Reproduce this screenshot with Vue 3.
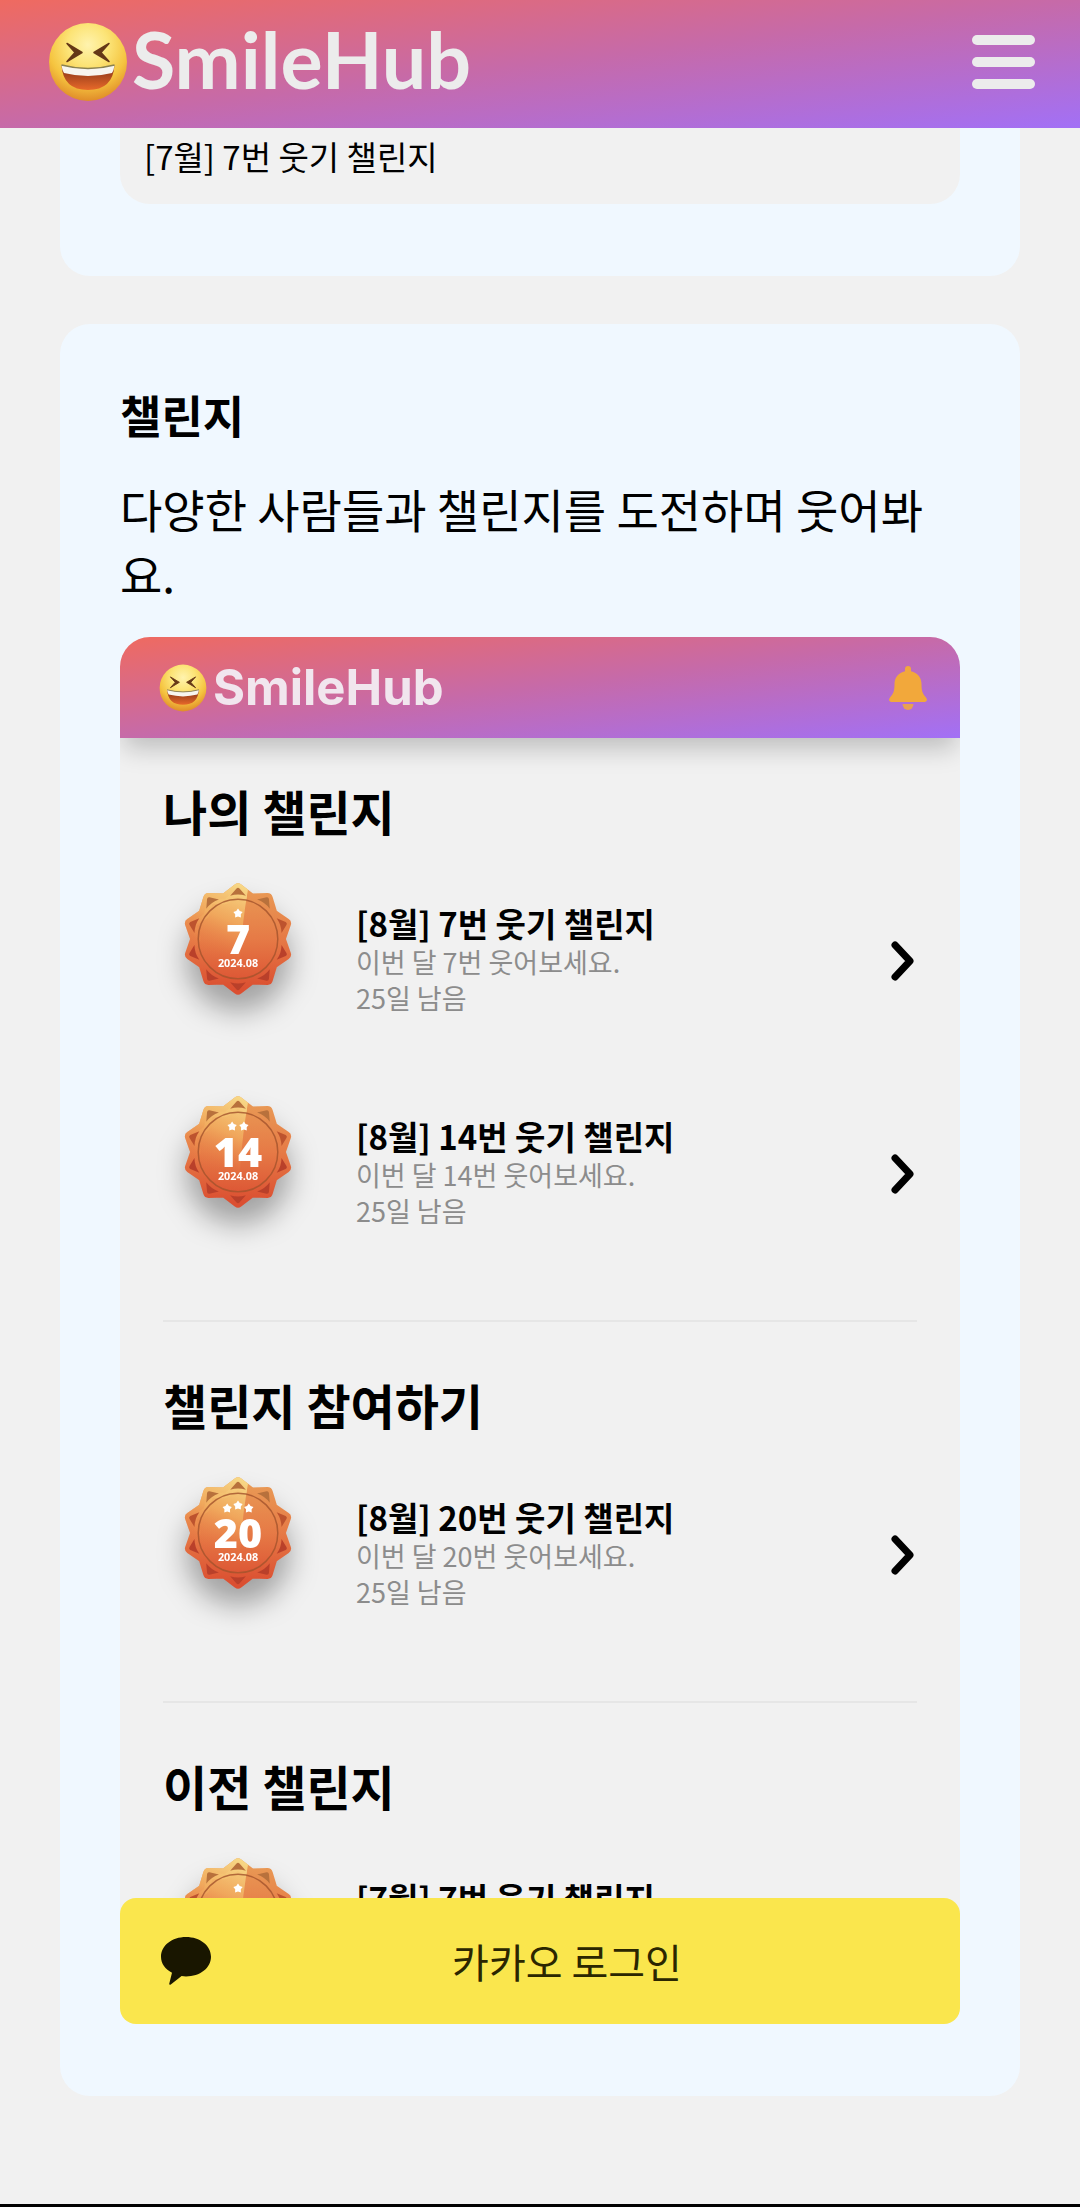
<script setup>
const sections = [
  {
    title: '나의 챌린지',
    rows: [
      { count: '7', month: '8월', period: '2024.08', stars: 1, left: '25일 남음' },
      { count: '14', month: '8월', period: '2024.08', stars: 2, left: '25일 남음' },
    ],
  },
  {
    title: '챌린지 참여하기',
    rows: [{ count: '20', month: '8월', period: '2024.08', stars: 3, left: '25일 남음' }],
  },
  {
    title: '이전 챌린지',
    rows: [{ count: '7', month: '7월', stars: 1 }],
  },
]

const polar = (r, deg) => {
  const a = (deg * Math.PI) / 180
  return `${(r * Math.sin(a)).toFixed(2)},${(-r * Math.cos(a)).toFixed(2)}`
}

// ten-pointed rosette outline
const rosette = Array.from({ length: 20 }, (_, i) => polar(i % 2 ? 43 : 51, i * 18)).join(' ')
const spikes = Array.from({ length: 10 }, (_, i) => i * 36)
const star = Array.from({ length: 10 }, (_, i) => polar(i % 2 ? 3 : 5, i * 36)).join(' ')
const starSpots = {
  1: [[0, -26]],
  2: [[-6, -26], [6, -26]],
  3: [[-11, -25], [0, -28], [11, -25]],
}
</script>

<template>
  <div class="page">
    <svg class="defs" width="0" height="0" aria-hidden="true">
      <defs>
        <radialGradient id="face" cx="0.5" cy="0.28" r="0.75">
          <stop offset="0" stop-color="#fff3ae" />
          <stop offset="0.35" stop-color="#fce477" />
          <stop offset="0.68" stop-color="#f5c43f" />
          <stop offset="1" stop-color="#dd8426" />
        </radialGradient>
        <linearGradient id="mouth" x1="0" y1="0" x2="0" y2="1">
          <stop offset="0" stop-color="#7e2f16" />
          <stop offset="1" stop-color="#e8692a" />
        </linearGradient>
        <linearGradient id="medal" x1="0" y1="0" x2="0" y2="1">
          <stop offset="0" stop-color="#e99a55" />
          <stop offset="0.5" stop-color="#e67a46" />
          <stop offset="1" stop-color="#db4f31" />
        </linearGradient>
        <linearGradient id="shine" x1="0.7" y1="0" x2="0.4" y2="0.75">
          <stop offset="0" stop-color="#f8dc8a" />
          <stop offset="0.5" stop-color="#f3b161" stop-opacity="0.75" />
          <stop offset="1" stop-color="#e8763f" stop-opacity="0" />
        </linearGradient>
        <clipPath id="shine-clip"><path d="M-60-60H12Q2-10 0 60H-60Z" /></clipPath>
        <symbol id="laugh" viewBox="0 0 80 80">
          <circle cx="40" cy="40" r="39" fill="url(#face)" />
          <path d="M19 21.500 34 30.500 19 39.500 27 30.500Z" fill="#653817" stroke="#653817" stroke-width="1.500" stroke-linejoin="round" />
          <path d="M61 21.500 46 30.500 61 39.500 53 30.500Z" fill="#653817" stroke="#653817" stroke-width="1.500" stroke-linejoin="round" />
          <path d="M13.500 43Q40 50 66.500 43Q65 68 40 68T13.500 43Z" fill="url(#mouth)" />
          <path d="M13.500 43Q40 50 66.500 43Q66 48 64 51Q40 57 16 51Q14 48 13.500 43Z" fill="#f7f5ef" />
          <path d="M13.500 43Q40 50 66.500 43" fill="none" stroke="#8a8250" stroke-width="1.500" />
        </symbol>
      </defs>
    </svg>

    <header class="topbar">
      <a class="brand" href="#">
        <svg class="brand-face" aria-hidden="true"><use href="#laugh" /></svg>
        <span class="brand-name">SmileHub</span>
      </a>
      <button class="menu" type="button" aria-label="메뉴">
        <span></span><span></span><span></span>
      </button>
    </header>

    <main class="content">
      <section class="card card-scrolled">
        <div class="note">[7월] 7번 웃기 챌린지</div>
      </section>

      <section class="card">
        <h2 class="card-title">챌린지</h2>
        <p class="card-text">다양한 사람들과 챌린지를 도전하며 웃어봐요.</p>

        <div class="preview">
          <div class="preview-bar">
            <svg class="preview-face" aria-hidden="true"><use href="#laugh" /></svg>
            <span class="preview-name">SmileHub</span>
            <svg class="bell" viewBox="0 0 38 44" aria-hidden="true">
              <path d="M19 0a3 3 0 0 1 3 3v2.200C28.500 6.500 32.500 11.500 32.500 18c0 7 1 9.500 4.500 13.500 2 2.500.5 4.500-1.500 4.500H2.500C.5 36-1 34 1 31.500 4.500 27.500 5.500 25 5.500 18 5.500 11.500 9.500 6.500 16 5.200V3a3 3 0 0 1 3-3Z" fill="#f2a83b" />
              <path d="M13.500 38h11a5.500 6 0 0 1-11 0Z" fill="#e9a050" />
            </svg>
          </div>
          <div class="preview-body">
            <div v-for="section in sections" :key="section.title" class="group">
              <h3 class="group-title">{{ section.title }}</h3>
              <div v-for="row in section.rows" :key="row.count" class="row">
                <svg class="badge" viewBox="-57 -57 114 114">
                  <polygon :points="rosette" fill="url(#medal)" stroke="url(#medal)" stroke-width="11" stroke-linejoin="round" />
                  <polygon :points="rosette" fill="url(#shine)" stroke="url(#shine)" stroke-width="11" stroke-linejoin="round" clip-path="url(#shine-clip)" />
                  <g v-for="deg in spikes" :key="deg" :transform="`rotate(${deg})`">
                    <path d="M-8-44Q0-46.500 8-44L1.500-51.500Q0-53-1.500-51.500Z" :fill="deg > 100 && deg < 260 ? '#b9402a' : deg > 60 && deg < 300 ? '#bd532e' : '#b8713c'" />
                  </g>
                  <circle r="40.500" fill="none" stroke="#a3532c" stroke-opacity="0.8" stroke-width="1.500" />
                  <polygon v-for="(spot, i) in starSpots[row.stars]" :key="i" :points="star" :transform="`translate(${spot})`" fill="#fff" />
                  <text class="badge-count" y="15" text-anchor="middle">{{ row.count }}</text>
                  <text v-if="row.period" class="badge-date" y="28" text-anchor="middle">{{ row.period }}</text>
                </svg>
                <div class="row-text">
                  <strong class="row-title">[{{ row.month }}] {{ row.count }}번 웃기 챌린지</strong>
                  <template v-if="row.left">
                    <span class="row-desc">이번 달 {{ row.count }}번 웃어보세요.</span>
                    <span class="row-desc">{{ row.left }}</span>
                  </template>
                </div>
                <svg class="chevron" viewBox="0 0 24 40" aria-hidden="true">
                  <path d="M4 4 19 20 4 36" fill="none" stroke="#000" stroke-width="7" stroke-linecap="round" stroke-linejoin="round" />
                </svg>
              </div>
            </div>
          </div>
        </div>

        <button class="kakao" type="button">
          <svg class="kakao-icon" viewBox="0 0 50 48" aria-hidden="true">
            <path d="M25 0C39 0 50 8.500 50 19.700S39 39.400 25 39.400c-1.500 0-3-.1-4.400-.3L9.800 47.500c-1 .7-1.900.2-1.500-1L11 35.700C4.300 32.300 0 26.500 0 19.700 0 8.500 11 0 25 0Z" fill="#191600" />
          </svg>
          <span class="kakao-label">카카오 로그인</span>
        </button>
      </section>
    </main>

    <footer class="edge"></footer>
  </div>
</template>

<style>
body {
  margin: 0;
  background: #f1f1f1;
}
</style>

<style scoped>
.page {
  display: flex;
  flex-direction: column;
  min-height: 100vh;
  background: #f1f1f1;
  color: #000;
  font-family: "Noto Sans CJK KR", "Noto Sans", sans-serif;
}

.defs {
  position: absolute;
}

.topbar {
  display: flex;
  align-items: center;
  justify-content: space-between;
  box-sizing: border-box;
  height: 128px;
  padding: 0 45px 4px 48px;
  background: linear-gradient(to bottom right, #ef6a60, #c66aa9 50%, #a270f6);
}

.brand {
  display: flex;
  align-items: center;
  gap: 4px;
  color: #ececec;
  text-decoration: none;
}

.brand-face {
  width: 80px;
  height: 80px;
}

.brand-name {
  padding-bottom: 6px;
  font: 700 79px/88px Lato, sans-serif;
}

.menu {
  display: flex;
  flex-direction: column;
  gap: 12px;
  padding: 0;
  border: 0;
  background: none;
}

.menu span {
  width: 63px;
  height: 10px;
  border-radius: 5px;
  background: #ececec;
}

.content {
  display: flex;
  flex-direction: column;
  gap: 48px;
  padding: 0 60px 108px;
}

.card {
  padding: 58px 60px 72px;
  border-radius: 30px;
  background: #f0f8ff;
}

.card-scrolled {
  padding-top: 0;
  border-radius: 0 0 30px 30px;
}

.note {
  padding: 4px 24px 24px;
  border-radius: 0 0 30px 30px;
  background: #f1f1f1;
  font-size: 33px;
  line-height: 48px;
}

.card-title {
  margin: 0;
  font-size: 45px;
  line-height: 65px;
}

.card-text {
  margin: 29px 0 31px;
  font-size: 46px;
  line-height: 65px;
  word-break: break-all;
}

.preview {
  height: 1276px;
  overflow: hidden;
  border-radius: 30px 30px 0 0;
  background: #f1f1f1;
}

.preview-bar {
  display: flex;
  align-items: center;
  height: 101px;
  padding: 0 33px 0 39px;
  background: linear-gradient(to bottom right, #ef6a60, #c66aa9 50%, #a270f6);
  box-shadow: 0 14px 24px -4px rgba(0, 0, 0, 0.22);
}

.preview-face {
  width: 48px;
  height: 48px;
  margin-right: 6px;
}

.preview-name {
  flex: 1;
  color: #f1e6ee;
  font: 700 49px/60px Inter, sans-serif;
}

.bell {
  width: 38px;
  height: 44px;
}

.preview-body {
  padding: 42px 43px 0;
}

.group + .group {
  margin-top: 40px;
  padding-top: 52px;
  border-top: 2px solid #e6e6e6;
}

.group-title {
  margin: 0 0 14px;
  font-size: 48px;
  line-height: 60px;
}

.row {
  display: flex;
  align-items: flex-start;
  height: 213px;
}

.badge {
  width: 112px;
  height: 112px;
  margin: 29px 62px 0 19px;
  overflow: visible;
  filter: drop-shadow(0 20px 14px rgba(0, 0, 0, 0.33));
}

.badge-count {
  fill: #fff;
  font: 800 42px "Open Sans", sans-serif;
}

.badge-date {
  fill: #fff;
  font: 700 11px "Open Sans", sans-serif;
}

.row-text {
  display: flex;
  flex: 1;
  flex-direction: column;
  padding-top: 49px;
}

.row-title {
  font-size: 33px;
  line-height: 41px;
}

.row-desc {
  color: #8c8c8c;
  font-size: 27px;
  line-height: 36px;
}

.chevron {
  align-self: center;
  width: 24px;
  height: 40px;
  margin-right: 2px;
}

.kakao {
  position: relative;
  display: flex;
  align-items: center;
  width: 100%;
  height: 126px;
  margin-top: -15px;
  padding: 0 38px 0 40px;
  border: 0;
  border-radius: 16px;
  background: #fae64d;
  color: #2b2600;
  font-family: inherit;
}

.kakao-icon {
  width: 52px;
  height: 48px;
}

.kakao-label {
  flex: 1;
  font-size: 40px;
  line-height: 60px;
}

.edge {
  height: 3px;
  margin-top: auto;
  background: #000;
}
</style>
